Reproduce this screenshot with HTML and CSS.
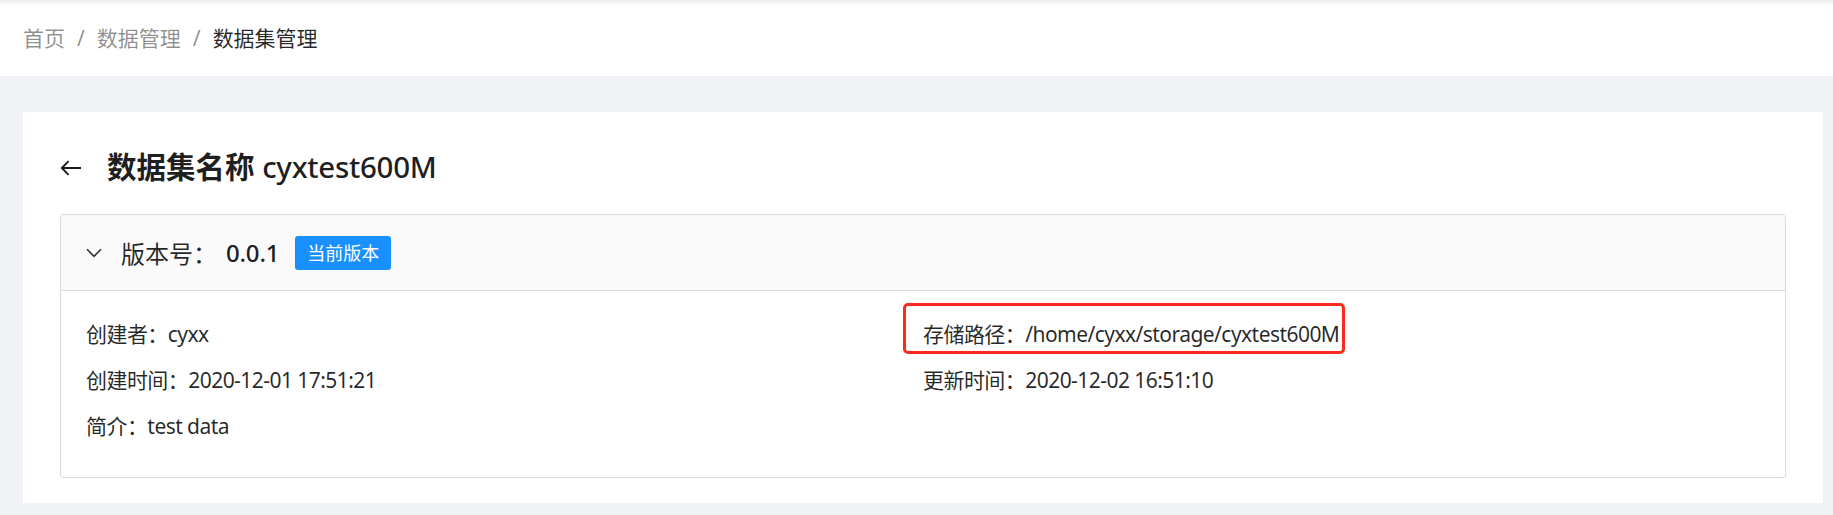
FILE: index.html
```html
<!DOCTYPE html>
<html lang="zh-CN">
<head>
<meta charset="utf-8">
<title>数据集管理</title>
<link rel="stylesheet" href="styles.css">
</head>
<body>
<header class="topbar">
  <nav class="breadcrumb">
    <span class="crumb">首页</span><span class="sep">/</span><span class="crumb">数据管理</span><span class="sep">/</span><span class="crumb current">数据集管理</span>
  </nav>
</header>
<main class="content">
  <section class="card">
    <div class="title-row">
      <svg class="back" width="22" height="16" viewBox="0 0 22 16" aria-hidden="true">
        <path d="M21 8H2.2M8.6 1.2L1.8 8l6.8 6.8" fill="none" stroke="#1a1a1a" stroke-width="1.9" stroke-linecap="butt" stroke-linejoin="miter"/>
      </svg>
      <h1 class="title">数据集名称 <span class="name">cyxtest600M</span></h1>
    </div>
    <div class="panel">
      <div class="panel-header">
        <svg class="chev" width="16" height="10" viewBox="0 0 16 10" aria-hidden="true">
          <path d="M1 1.2L8 8.4l7-7.2" fill="none" stroke="#333" stroke-width="1.6"/>
        </svg>
        <span class="ver-label">版本号：</span><span class="ver">0.0.1</span>
        <span class="tag">当前版本</span>
      </div>
      <div class="panel-body">
        <div class="item">创建者：cyxx</div>
        <div class="item mark-wrap">存储路径：/home/cyxx/storage/cyxtest600M<span class="mark"></span></div>
        <div class="item">创建时间：2020-12-01 17:51:21</div>
        <div class="item">更新时间：2020-12-02 16:51:10</div>
        <div class="item">简介：test data</div>
      </div>
    </div>
  </section>
</main>
</body>
</html>
```

FILE: styles.css
```css
* { box-sizing: border-box; }
html, body { margin: 0; padding: 0; }
body {
  background: #f0f2f5;
  font-family: "Segoe UI", "Noto Sans", "Noto Sans CJK SC", sans-serif;
  color: rgba(0, 0, 0, 0.85);
  width: 1833px;
  height: 515px;
  overflow: hidden;
}
.topbar {
  height: 76px;
  background: linear-gradient(#ececec 0, #f7f7f7 3px, #fff 6px);
  display: flex;
  align-items: center;
  padding: 0 0 0 23px;
}
.breadcrumb {
  font-size: 21px;
  line-height: 30px;
  display: flex;
  align-items: center;
  color: rgba(0, 0, 0, 0.45);
}
.breadcrumb .sep { margin: 0 12px; }
.breadcrumb .current { color: rgba(0, 0, 0, 0.85); }
.content {
  padding: 36px 10px 12px 23px;
}
.card {
  background: #fff;
  height: 391px;
  padding: 36px 37px 25px 37px;
}
.title-row {
  display: flex;
  align-items: center;
  height: 38px;
  margin-bottom: 28px;
}
.back { margin: 2px 0 0 0; flex: none; }
.title {
  margin: 0 0 0 25px;
  font-size: 29.5px;
  font-weight: 700;
  line-height: 38px;
  color: rgba(0, 0, 0, 0.88);
}
.title .name { font-weight: 500; letter-spacing: -0.3px; }
.panel {
  border: 1px solid #d9d9d9;
  border-radius: 3px;
}
.panel-header {
  height: 76px;
  background: #fafafa;
  border-bottom: 1px solid #d9d9d9;
  display: flex;
  align-items: center;
  padding-left: 25px;
  font-size: 24px;
}
.chev { flex: none; margin-right: 19px; margin-top: 1px; }
.ver-label { color: rgba(0, 0, 0, 0.85); }
.ver { font-weight: 500; color: rgba(0, 0, 0, 0.9); margin-left: 9px; letter-spacing: -0.2px; }
.tag {
  margin-left: 16px;
  background: #1890ff;
  color: #fff;
  font-size: 18px;
  line-height: 34px;
  height: 34px;
  padding: 0 12px;
  border-radius: 3px;
}
.panel-body {
  display: grid;
  grid-template-columns: 1fr 1fr;
  padding: 20px 25px 28px 25px;
}
.item {
  font-size: 21px;
  line-height: 46px;
  height: 46px;
  white-space: nowrap;
  letter-spacing: -0.55px;
}
.mark-wrap { position: relative; }
.mark {
  position: absolute;
  left: -20px;
  top: -8px;
  width: 442px;
  height: 51px;
  border: 3px solid #fb2a1c;
  border-radius: 5px;
  pointer-events: none;
}
```
